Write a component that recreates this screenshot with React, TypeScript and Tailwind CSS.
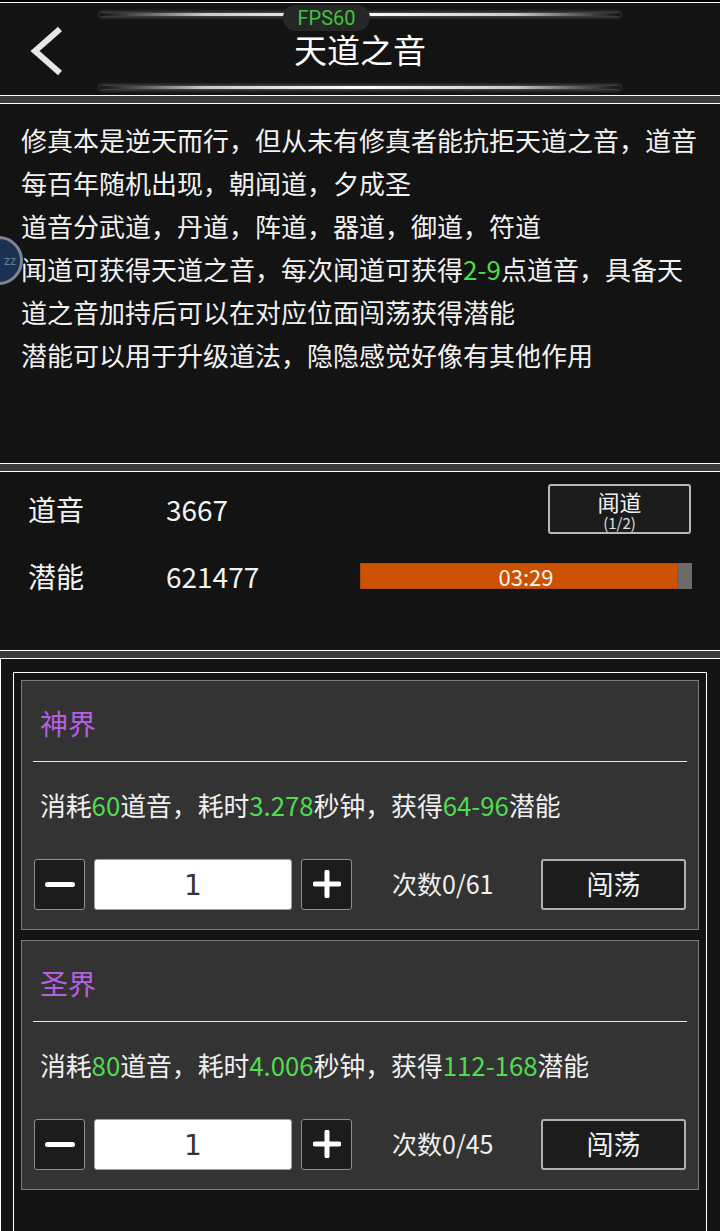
import React from "react";

const G = ({ children }: { children: React.ReactNode }) => (
  <span className="text-[#4fdc4f]">{children}</span>
);

function Card({
  title,
  cost,
  time,
  gain,
  count,
}: {
  title: string;
  cost: string;
  time: string;
  gain: string;
  count: string;
}) {
  return (
    <div className="border border-[#7d7d7d] bg-[#333333]">
      <div className="h-[80px] flex items-center pl-[18px] pt-[4px] text-[28px] text-[#b660e2]">
        {title}
      </div>
      <div className="mx-[11px] h-px bg-[#e8e8e8]" />
      <div className="h-[86px] flex items-center pl-[18px] text-[25.8px] text-[#f0f0f0] whitespace-nowrap">
        消耗<G>{cost}</G>道音，耗时<G>{time}</G>秒钟，获得<G>{gain}</G>潜能
      </div>
      <div className="mt-[10px] mb-[19px] h-[52px] flex items-center pl-[12px] pr-[12px]">
        <div className="w-[51px] h-[51px] border border-[#8f8f8f] rounded-[3px] bg-[#1c1c1c] flex items-center justify-center">
          <div className="w-[30px] h-[5px] rounded-full bg-white" />
        </div>
        <div className="ml-[9px] w-[198px] h-[51px] bg-white rounded-[3px] border border-[#a0a0a0] flex items-center justify-center pt-[3px] text-[28px] text-[#333] font-['DejaVu_Sans',sans-serif]">
          1
        </div>
        <div className="ml-[9px] w-[51px] h-[51px] border border-[#8f8f8f] rounded-[3px] bg-[#1c1c1c] flex items-center justify-center">
          <svg width="28" height="28" viewBox="0 0 28 28">
            <path d="M14 2v24M2 14h24" stroke="white" strokeWidth="5" strokeLinecap="round" />
          </svg>
        </div>
        <div className="ml-[40px] flex-1 text-[25px] text-[#f0f0f0]">次数{count}</div>
        <div className="w-[145px] h-[51px] border-2 border-[#b0b0b0] rounded-[3px] bg-[#1c1c1c] flex items-center justify-center text-[27px] text-[#f2f2f2]">
          闯荡
        </div>
      </div>
    </div>
  );
}

export default function App() {
  return (
    <div className="relative w-[720px] h-[1231px] overflow-hidden bg-black font-['Noto_Sans_CJK_SC','Noto_Sans',sans-serif] text-white">
      <div className="h-[2px]" />
      {/* Header */}
      <div className="h-[94px] border-y border-white bg-[#131313] flex flex-col pt-[10px] pb-[6px]">
        <div className="mx-[100px] h-[3px] bg-[linear-gradient(90deg,transparent,#c8c8c8_20%,#ffffff_50%,#c8c8c8_80%,transparent)] shadow-[0_0_4px_rgba(255,255,255,0.5)]" />
        <div className="flex-1 grid grid-cols-[1fr_auto_1fr] items-center pb-[5px]">
          <div className="pl-[30px] flex items-center pt-[5px]">
            <svg width="34" height="50" viewBox="0 0 34 50">
              <path d="M30 3 L5 25 L30 47" fill="none" stroke="#e8e8e8" strokeWidth="6" strokeLinejoin="miter" />
            </svg>
          </div>
          <div className="text-[33px] leading-[30px] text-white">天道之音</div>
          <div />
        </div>
        <div className="mx-[100px] h-[3px] bg-[linear-gradient(90deg,transparent,#c8c8c8_20%,#ffffff_50%,#c8c8c8_80%,transparent)] shadow-[0_0_4px_rgba(255,255,255,0.5)]" />
      </div>
      <div className="h-[7px] bg-[#3b3b3b]" />
      {/* Text panel */}
      <div className="h-[361px] border-y border-white bg-[#131313] pt-[14px] pl-[21px] text-[26px] leading-[43px] text-[#f2f2f2]">
        <div className="whitespace-nowrap">修真本是逆天而行，但从未有修真者能抗拒天道之音，道音</div>
        <div className="whitespace-nowrap">每百年随机出现，朝闻道，夕成圣</div>
        <div className="whitespace-nowrap">道音分武道，丹道，阵道，器道，御道，符道</div>
        <div className="whitespace-nowrap">
          闻道可获得天道之音，每次闻道可获得<G>2-9</G>点道音，具备天
        </div>
        <div className="whitespace-nowrap">道之音加持后可以在对应位面闯荡获得潜能</div>
        <div className="whitespace-nowrap">潜能可以用于升级道法，隐隐感觉好像有其他作用</div>
      </div>
      <div className="h-[7px] bg-[#3b3b3b]" />
      {/* Stats panel */}
      <div className="h-[180px] border-y border-white bg-[#131313] pt-[12px] flex flex-col gap-[17px]">
        <div className="h-[50px] flex items-center pl-[28px] pr-[29px]">
          <div className="w-[138px] text-[28px] text-[#f2f2f2]">道音</div>
          <div className="flex-1 text-[28px] text-[#f2f2f2]">3667</div>
          <div className="w-[143px] h-[50px] border-2 border-[#b8b8b8] rounded-[3px] bg-[#1b1b1b] flex flex-col items-center justify-center">
            <div className="text-[22px] leading-[24px] text-[#f2f2f2]">闻道</div>
            <div className="text-[15px] leading-[15px] text-[#e0e0e0] mt-[2px]">(1/2)</div>
          </div>
        </div>
        <div className="h-[50px] flex items-center pl-[28px] pr-[28px]">
          <div className="w-[138px] text-[28px] text-[#f2f2f2]">潜能</div>
          <div className="flex-1 text-[28px] text-[#f2f2f2]">621477</div>
          <div className="relative w-[332px] h-[26px] bg-[#6b6b6b] flex">
            <div className="w-[318px] h-full bg-[#cc5200] border border-[#a84a12]" />
            <div className="absolute inset-0 flex items-center justify-center text-[22px] leading-none text-[#f5f5f5]">
              03:29
            </div>
          </div>
        </div>
      </div>
      <div className="h-[7px] bg-[#3b3b3b]" />
      {/* Bottom panel */}
      <div className="h-[600px] border-t border-l border-white bg-[#131313] pl-[12px] pt-[13px]">
        <div className="w-[694px] h-[600px] border border-white p-[7px] flex flex-col gap-[10px]">
          <Card title="神界" cost="60" time="3.278" gain="64-96" count="0/61" />
          <Card title="圣界" cost="80" time="4.006" gain="112-168" count="0/45" />
        </div>
      </div>

      {/* FPS overlay */}
      <div className="absolute left-[283px] top-[5px] w-[87px] h-[26px] rounded-full bg-[#262626] flex items-center justify-center font-['Roboto',sans-serif] text-[20px] leading-none text-[#3fc43f]">
        FPS60
      </div>
      {/* Floating bubble */}
      <div className="absolute left-[-26px] top-[236px] w-[49px] h-[49px] rounded-full bg-[#1b3152] border-[3px] border-[#7d8794] flex items-center justify-end pr-[4px] text-[12px] text-[#6f7c90] font-['Roboto',sans-serif]">
        zz
      </div>
    </div>
  );
}
